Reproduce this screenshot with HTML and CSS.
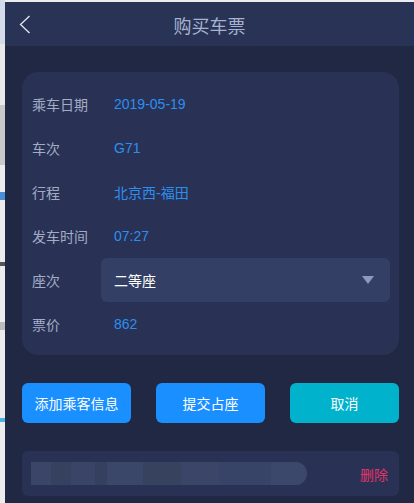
FILE: index.html
```html
<!DOCTYPE html>
<html lang="zh-CN">
<head>
    <meta charset="UTF-8">
    <meta name="viewport" content="width=device-width, initial-scale=1.0">
    <title>购买车票</title>
    <link rel="stylesheet" href="styles.css">
</head>
<body>

    <div class="page-edge"></div>

    <div class="sheet">
        <!-- Header -->
        <div class="top-bar">
            <div class="back">
                <svg width="12" height="19" viewBox="0 0 12 19">
                    <polyline points="10.5,1 1.5,9.5 10.5,18" fill="none" stroke="#e4e8f2" stroke-width="1.3"/>
                </svg>
            </div>
            <div class="title">购买车票</div>
            <div></div>
        </div>

        <div class="content">
            <!-- Ticket info -->
            <div class="card">
                <div class="row">
                    <span class="label">乘车日期</span>
                    <span class="value">2019-05-19</span>
                </div>
                <div class="row">
                    <span class="label">车次</span>
                    <span class="value">G71</span>
                </div>
                <div class="row">
                    <span class="label">行程</span>
                    <span class="value">北京西-福田</span>
                </div>
                <div class="row">
                    <span class="label">发车时间</span>
                    <span class="value">07:27</span>
                </div>
                <div class="row">
                    <span class="label">座次</span>
                    <div class="select">
                        <span>二等座</span>
                        <span class="caret"></span>
                    </div>
                </div>
                <div class="row">
                    <span class="label">票价</span>
                    <span class="value">862</span>
                </div>
            </div>

            <div class="actions">
                <button class="btn">添加乘客信息</button>
                <button class="btn">提交占座</button>
                <button class="btn cancel">取消</button>
            </div>

            <!-- Passenger list -->
            <div class="passenger">
                <div class="masked"></div>
                <span class="delete">删除</span>
            </div>
        </div>
    </div>

</body>
</html>
```

FILE: styles.css
```css
body {
    margin: 0;
    height: 503px;
    overflow: hidden;
    display: flex;
    background-color: #ececec;
    font-family: "Liberation Sans", "Noto Sans CJK SC", sans-serif;
}
.page-edge {
    width: 5px;
    flex-shrink: 0;
    background: linear-gradient(180deg,
        #d3dce8 0, #d3dce8 44px,
        #e9e9e9 44px, #e9e9e9 105px,
        #c9c9c9 105px, #c9c9c9 165px,
        #ececec 165px, #ececec 192px,
        #4a8fd6 192px, #4a8fd6 200px,
        #ececec 200px, #ececec 262px,
        #555 262px, #555 266px,
        #ececec 266px, #ececec 322px,
        #bbb 322px, #bbb 330px,
        #ececec 330px, #ececec 418px,
        #4ab3e6 418px, #4ab3e6 422px,
        #ececec 422px);
}
.sheet {
    flex: 1;
    margin-top: 2px;
    background-color: #212843;
}
.top-bar {
    height: 44px;
    display: grid;
    grid-template-columns: 1fr auto 1fr;
    align-items: center;
    background-color: #283355;
}
.back {
    padding-left: 14px;
    display: flex;
}
.title {
    font-size: 18px;
    color: #a7b2d0;
    padding-top: 2px;
}
.content {
    padding: 26px 15px 0 17px;
}
.card {
    background-color: #293254;
    border-radius: 16px;
    padding: 10px 9px 9px 10px;
}
.row {
    display: flex;
    align-items: center;
    height: 44px;
    font-size: 14px;
}
.label {
    width: 69px;
    flex-shrink: 0;
    color: #a3acc6;
}
.value {
    padding-left: 13px;
    color: #2b8ff2;
}
.select {
    flex: 1;
    height: 44px;
    display: flex;
    align-items: center;
    justify-content: space-between;
    padding: 0 16px 0 13px;
    background-color: #333f64;
    border-radius: 6px;
    color: #fff;
}
.caret {
    width: 0;
    height: 0;
    border-left: 6px solid transparent;
    border-right: 6px solid transparent;
    border-top: 8px solid #8b9abf;
}
.actions {
    display: flex;
    justify-content: space-between;
    margin-top: 28px;
}
.btn {
    width: 109px;
    height: 40px;
    border: none;
    border-radius: 6px;
    background-color: #1a8fff;
    color: #fff;
    font-size: 14px;
    font-family: inherit;
    cursor: pointer;
}
.btn.cancel {
    background-color: #00b2cc;
}
.passenger {
    margin-top: 28px;
    height: 45px;
    display: flex;
    align-items: center;
    justify-content: space-between;
    padding: 0 11px 0 9px;
    background-color: #293254;
    border-radius: 6px;
}
.masked {
    width: 276px;
    height: 23px;
    border-radius: 0 12px 12px 0;
    background:
        linear-gradient(90deg,
            #3a4567 0, #3a4567 20px,
            #36415f 20px, #36415f 40px,
            #394466 40px, #394466 64px,
            #35405f 64px, #35405f 76px,
            #3b4769 76px, #3b4769 112px,
            #37425f 112px, #37425f 150px,
            #3a4568 150px, #3a4568 188px,
            #384467 188px, #384467 240px,
            #3c486b 240px);
}
.delete {
    font-size: 14px;
    color: #e2336c;
}
```
